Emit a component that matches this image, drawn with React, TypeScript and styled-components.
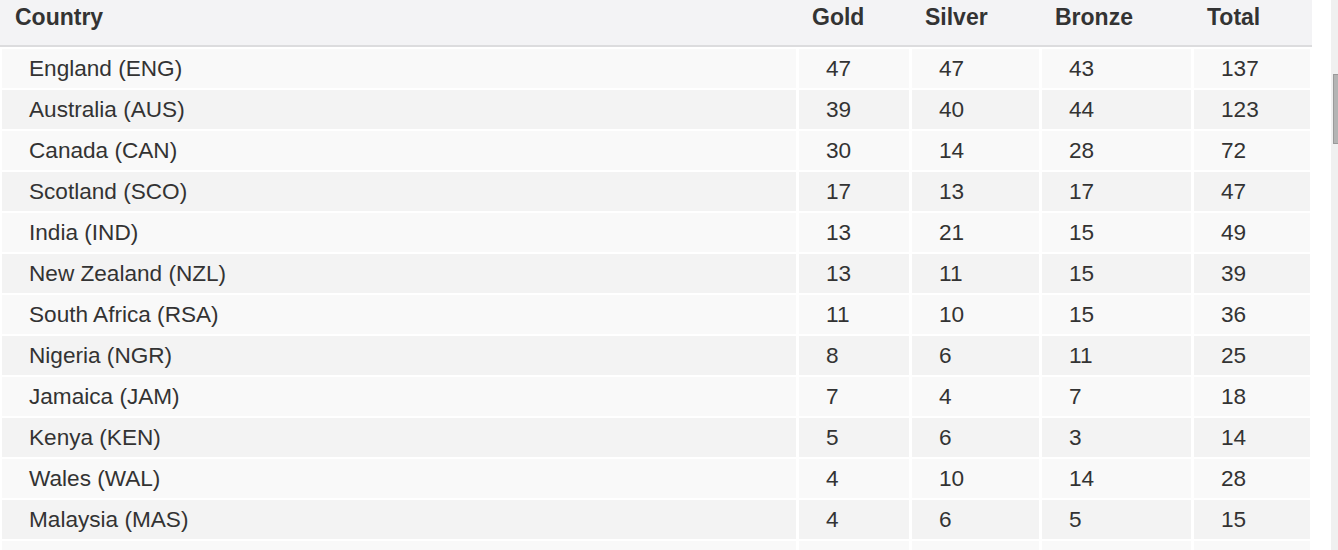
import styled, { createGlobalStyle } from "styled-components";

const GlobalStyle = createGlobalStyle`
  html, body {
    margin: 0;
    padding: 0;
    background: #fff;
    overflow: hidden;
  }
  body {
    font-family: "Liberation Sans", Arial, Helvetica, sans-serif;
    color: #333;
  }
`;

type Medal = {
  country: string;
  gold: number;
  silver: number;
  bronze: number;
  total: number;
};

const medals: Medal[] = [
  { country: "England (ENG)", gold: 47, silver: 47, bronze: 43, total: 137 },
  { country: "Australia (AUS)", gold: 39, silver: 40, bronze: 44, total: 123 },
  { country: "Canada (CAN)", gold: 30, silver: 14, bronze: 28, total: 72 },
  { country: "Scotland (SCO)", gold: 17, silver: 13, bronze: 17, total: 47 },
  { country: "India (IND)", gold: 13, silver: 21, bronze: 15, total: 49 },
  { country: "New Zealand (NZL)", gold: 13, silver: 11, bronze: 15, total: 39 },
  { country: "South Africa (RSA)", gold: 11, silver: 10, bronze: 15, total: 36 },
  { country: "Nigeria (NGR)", gold: 8, silver: 6, bronze: 11, total: 25 },
  { country: "Jamaica (JAM)", gold: 7, silver: 4, bronze: 7, total: 18 },
  { country: "Kenya (KEN)", gold: 5, silver: 6, bronze: 3, total: 14 },
  { country: "Wales (WAL)", gold: 4, silver: 10, bronze: 14, total: 28 },
  { country: "Malaysia (MAS)", gold: 4, silver: 6, bronze: 5, total: 15 },
];

// column widths shared by head and body rows
const COLUMNS = "794px 110px 127px 149px 116px";

const Page = styled.div`
  display: flex;
  height: 550px;
  overflow: hidden;
`;

const TableArea = styled.div`
  width: 1312px;
  flex: none;
`;

const HeadRow = styled.div`
  display: grid;
  grid-template-columns: ${COLUMNS};
  column-gap: 3px;
  height: 45px;
  padding: 0 2px;
  background: #f3f3f5;
  border-bottom: 2px solid #dcdcde;
`;

const HeadCell = styled.div`
  padding: 4px 0 0 13px;
  font-size: 23px;
  font-weight: bold;
  color: #333;
`;

const Body = styled.div`
  display: flex;
  flex-direction: column;
  gap: 2px;
  padding: 2px 2px 0;
`;

const Row = styled.div`
  display: grid;
  grid-template-columns: ${COLUMNS};
  column-gap: 3px;
  height: 39px;
  flex: none;
`;

const Cell = styled.div<{ $even: boolean }>`
  display: flex;
  align-items: center;
  padding-left: 27px;
  font-size: 22.6px;
  color: #333;
  white-space: nowrap;
  background: ${(p) => (p.$even ? "#f3f3f3" : "#f9f9f9")};
`;

const ScrollTrack = styled.div`
  margin-left: auto;
  width: 7px;
  height: 550px;
  background: #f0f0f0;
  padding: 74px 0 0 2px;
  box-sizing: border-box;
`;

const ScrollThumb = styled.div`
  width: 5px;
  height: 70px;
  box-sizing: border-box;
  background: #b4b4b4;
  border: 1px solid #9a9a9a;
  border-right: none;
`;

export default function App() {
  return (
    <Page>
      <GlobalStyle />
      <TableArea>
        <HeadRow>
          <HeadCell>Country</HeadCell>
          <HeadCell>Gold</HeadCell>
          <HeadCell>Silver</HeadCell>
          <HeadCell>Bronze</HeadCell>
          <HeadCell>Total</HeadCell>
        </HeadRow>
        <Body>
          {medals.map((m, i) => {
            const even = i % 2 === 1;
            return (
              <Row key={m.country}>
                <Cell $even={even}>{m.country}</Cell>
                <Cell $even={even}>{m.gold}</Cell>
                <Cell $even={even}>{m.silver}</Cell>
                <Cell $even={even}>{m.bronze}</Cell>
                <Cell $even={even}>{m.total}</Cell>
              </Row>
            );
          })}
          {/* next row, scrolled below the fold */}
          <Row>
            <Cell $even={false} />
            <Cell $even={false} />
            <Cell $even={false} />
            <Cell $even={false} />
            <Cell $even={false} />
          </Row>
        </Body>
      </TableArea>
      <ScrollTrack>
        <ScrollThumb />
      </ScrollTrack>
    </Page>
  );
}
